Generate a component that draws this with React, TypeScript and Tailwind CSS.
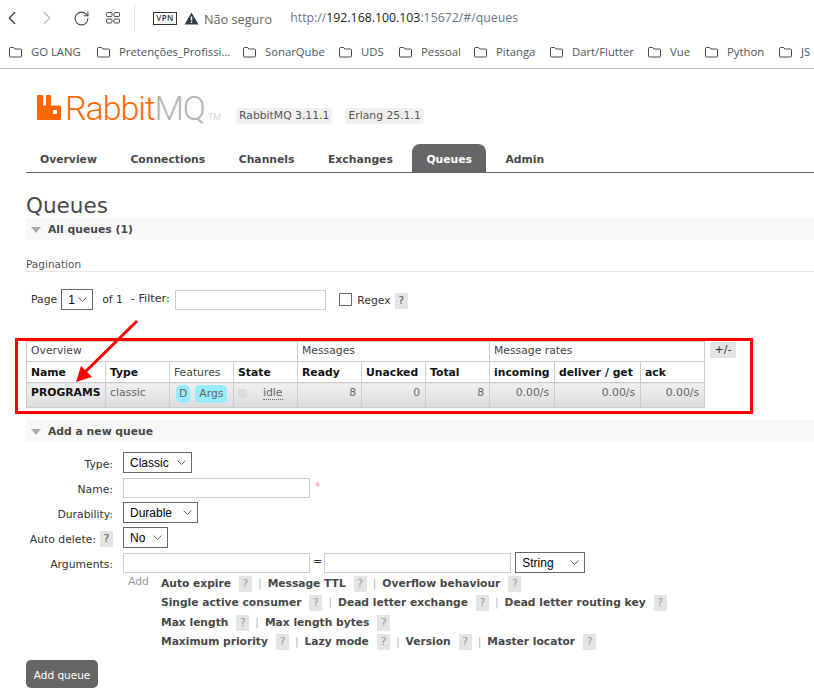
import { ChevronLeft, ChevronRight, RotateCw } from "lucide-react";
import { ReactNode } from "react";

const bookmarks = [
  { name: "GO LANG", width: "w-[88px]" },
  { name: "Pretenções_Profissi...", width: "w-[146px]" },
  { name: "SonarQube", width: "w-[96px]" },
  { name: "UDS", width: "w-[60px]" },
  { name: "Pessoal", width: "w-[75px]" },
  { name: "Pitanga", width: "w-[76px]" },
  { name: "Dart/Flutter", width: "w-[98px]" },
  { name: "Vue", width: "w-[57px]" },
  { name: "Python", width: "w-[74px]" },
  { name: "JS", width: "w-[35px]" },
];

const tabs = ["Overview", "Connections", "Channels", "Exchanges", "Queues", "Admin"];

const FolderIcon = () => (
  <svg width="13" height="11" viewBox="0 0 13 11" fill="none" stroke="#45494d" strokeWidth="1" className="mr-[9px] shrink-0">
    <path d="M0.5 1.5 a1 1 0 0 1 1-1 h3 l1.5 1.5 h5.5 a1 1 0 0 1 1 1 v6 a1 1 0 0 1-1 1 h-10 a1 1 0 0 1-1-1 z" />
  </svg>
);

const Help = ({ dark }: { dark?: boolean }) => (
  <span
    className={`inline-block h-[16px] w-[13px] bg-[#e4e4e4] text-center align-middle text-[11px] leading-[16px] font-normal ${dark ? "text-[#555]" : "text-[#999]"}`}
  >
    ?
  </span>
);

const SectionBar = ({ title }: { title: string }) => (
  <div className="flex h-[22px] items-center bg-[#f8f8f8] pl-[5px]">
    <span className="mt-[2px] h-0 w-0 border-x-[5px] border-t-[6px] border-x-transparent border-t-[#aaa]" />
    <span className="ml-[7px] pt-[3px] text-[10.8px] font-bold text-[#484848]">{title}</span>
  </div>
);

const Th = ({ children, span, bold = true }: { children: ReactNode; span?: number; bold?: boolean }) => (
  <th
    colSpan={span}
    className={`border border-[#ccc] pl-[4px] pr-[5px] text-left text-[10.8px] whitespace-nowrap ${bold ? "font-bold text-[#111]" : "font-normal text-[#444]"}`}
  >
    {children}
  </th>
);

const Td = ({ children, right = false }: { children: ReactNode; right?: boolean }) => (
  <td
    className={`border border-[#ccc] bg-linear-to-b from-[#f0f0f0] to-[#dcdcdc] pl-[4px] pr-[5px] pb-[4px] text-[10.8px] text-[#666] ${right ? "text-right" : "text-left"}`}
  >
    {children}
  </td>
);

// native-looking select with the thin chevron of the reference
const Select = ({ value, width }: { value: string; width: string }) => (
  <span
    className={`relative flex h-[21px] items-center border border-[#666] bg-white pl-[6px] text-[12px] text-black [font-family:'Liberation_Sans',sans-serif] ${width}`}
  >
    {value}
    <svg width="9" height="6" viewBox="0 0 9 6" fill="none" stroke="#666" className="absolute right-[5px] top-[7px]">
      <path d="M0.5 0.5 L4.5 4.5 L8.5 0.5" />
    </svg>
  </span>
);

const FormRow = ({ label, children }: { label: ReactNode; children: ReactNode }) => (
  <div className="flex h-[21px] items-center">
    <div className="mr-[10px] w-[87px] pt-[6px] text-right text-[10.8px] whitespace-nowrap text-[#333]">{label}</div>
    {children}
  </div>
);

const TextInput = () => <span className="h-[20px] w-[187px] border border-[#ccc] bg-white" />;

// one argument shortcut: bold link, help badge and optional separator
const Arg = ({ name, sep = true }: { name: string; sep?: boolean }) => (
  <>
    <span>{name}</span>
    <span className="ml-[8px]">
      <Help />
    </span>
    {sep && <span className="mx-[6px] font-normal text-[#a9b8c6]">|</span>}
  </>
);

const argLines = [
  ["Auto expire", "Message TTL", "Overflow behaviour"],
  ["Single active consumer", "Dead letter exchange", "Dead letter routing key"],
  ["Max length", "Max length bytes"],
  ["Maximum priority", "Lazy mode", "Version", "Master locator"],
];

export default function App() {
  return (
    <div className="relative h-[691px] w-[814px] overflow-hidden bg-white [font-family:'DejaVu_Sans',sans-serif]">
      {/* browser chrome */}
      <header className="h-[69px] border-b border-[#b4c3d0] [font-family:'Open_Sans',sans-serif]">
        <div className="flex h-[36px] items-center">
          <ChevronLeft size={22} strokeWidth={1.5} className="ml-[1px] text-[#45494d]" />
          <ChevronRight size={22} strokeWidth={1.5} className="ml-[13px] text-[#b8bcc0]" />
          <RotateCw size={17} strokeWidth={1.5} className="ml-[15px] text-[#45494d]" />
          <svg width="14" height="12" viewBox="0 0 14 12" fill="none" stroke="#45494d" className="ml-[16px]">
            <rect x="0.5" y="0.5" width="5.5" height="4" rx="1" />
            <rect x="8" y="0.5" width="5.5" height="4" rx="1" />
            <rect x="0.5" y="7" width="5.5" height="4" rx="1" />
            <rect x="8" y="7" width="5.5" height="4" rx="1" />
          </svg>
          <span className="ml-[14px] h-[28px] w-px bg-[#e6e6e6]" />
          <span className="ml-[18px] flex h-[13px] w-[24px] items-center justify-center border border-[#333] text-[8px] font-semibold tracking-[0.5px] text-[#333]">
            VPN
          </span>
          <svg width="15" height="13" viewBox="0 0 15 13" className="ml-[7px]">
            <path d="M7.5 0.5 L14.5 12.5 H0.5 Z" fill="#333d47" />
            <rect x="6.8" y="4.5" width="1.4" height="4" fill="#fff" />
            <rect x="6.8" y="9.5" width="1.4" height="1.4" fill="#fff" />
          </svg>
          <span className="ml-[5px] mt-[3px] text-[12.7px] text-[#5f6368]">Não seguro</span>
          <span className="ml-[18px] text-[12.3px] text-[#6b7885]">
            http://<span className="text-[#222]">192.168.100.103</span>:15672/#/queues
          </span>
        </div>
        <div className="flex h-[32px] items-center pl-[9px] text-[11.3px] text-[#50565c]">
          {bookmarks.map((b) => (
            <div key={b.name} className={`flex shrink-0 items-center ${b.width}`}>
              <FolderIcon />
              <span className="whitespace-nowrap">{b.name}</span>
            </div>
          ))}
        </div>
      </header>

      <main className="pl-[26px]">
        {/* logo + versions */}
        <div className="flex h-[75px] items-start pl-[11px] pt-[19px]">
          <svg width="24" height="25" viewBox="0 0 24 25" className="mt-[7px] shrink-0">
            <path
              fillRule="evenodd"
              fill="#ff6600"
              d="M0 1 a1 1 0 0 1 1-1 h4 a1 1 0 0 1 1 1 v9.5 h3 v-9.5 a1 1 0 0 1 1-1 h3 a1 1 0 0 1 1 1 v9.5 h9 a1 1 0 0 1 1 1 v12.5 a1 1 0 0 1-1 1 h-22 a1 1 0 0 1-1-1 z M16 15 h4 v4 h-4 z"
            />
          </svg>
          <div className="ml-[4px] flex w-[171px] items-baseline text-[34px] leading-[40px] font-[350] tracking-[-1.1px] [font-family:'Roboto',sans-serif]">
            <span className="text-[#ff6600]">Rabbit</span>
            <span className="text-[#b4b4b4]">MQ</span>
            <span className="ml-[3px] text-[9px] tracking-normal text-[#c4c4c4]">TM</span>
          </div>
          <span className="mt-[20px] rounded-[4px] bg-[#f0f0f0] px-[3px] text-[10.8px] leading-[16px] whitespace-nowrap text-[#555]">RabbitMQ 3.11.1</span>
          <span className="ml-[13px] mt-[20px] rounded-[4px] bg-[#f0f0f0] px-[3px] text-[10.8px] leading-[16px] whitespace-nowrap text-[#555]">Erlang 25.1.1</span>
        </div>

        {/* tabs */}
        <nav className="flex h-[29px] gap-[5.5px] border-b border-[#666]">
          {tabs.map((t) => (
            <span
              key={t}
              className={`px-[14px] pt-[8px] text-[10.8px] font-bold ${t === "Queues" ? "rounded-t-[8px] bg-[#666] text-white" : "text-[#484848]"}`}
            >
              {t}
            </span>
          ))}
        </nav>

        <h1 className="mt-[20px] text-[21.5px] leading-[25px] text-[#484848]">Queues</h1>
        <SectionBar title="All queues (1)" />

        <div className="mt-[18px] h-[14px] border-b border-[#e5e5e5] text-[10.5px] leading-[12px] text-[#555]">Pagination</div>

        <div className="mt-[17px] flex h-[21px] items-center pl-[5px] text-[10.8px] text-[#333]">
          <span className="mt-[2px]">Page</span>
          <span className="ml-[4px]">
            <Select value="1" width="w-[32px]" />
          </span>
          <span className="ml-[9px] mt-[2px]">of 1</span>
          <span className="ml-[8px] text-[11.2px]">- Filter:</span>
          <span className="ml-[5.5px] h-[20px] w-[151px] border border-[#ccc]" />
          <span className="ml-[13px] h-[13px] w-[13px] border border-[#666]" />
          <span className="ml-[5px] mt-[4px]">Regex</span>
          <span className="ml-[4px] mt-[4px]">
            <Help dark />
          </span>
        </div>

        {/* queue table */}
        <div className="mt-[31px] flex items-start">
          <table className="w-[678px] table-fixed border-collapse">
            <colgroup>
              <col className="w-[79px]" />
              <col className="w-[64px]" />
              <col className="w-[64px]" />
              <col className="w-[64px]" />
              <col className="w-[64px]" />
              <col className="w-[64px]" />
              <col className="w-[64px]" />
              <col className="w-[65px]" />
              <col className="w-[86px]" />
              <col className="w-[64px]" />
            </colgroup>
            <thead>
              <tr className="h-[20px]">
                <Th span={4} bold={false}>Overview</Th>
                <Th span={3} bold={false}>Messages</Th>
                <Th span={3} bold={false}>Message rates</Th>
              </tr>
              <tr className="h-[21px] [&>th]:pt-[3px]">
                <Th>Name</Th>
                <Th>Type</Th>
                <Th bold={false}>Features</Th>
                <Th>State</Th>
                <Th>Ready</Th>
                <Th>Unacked</Th>
                <Th>Total</Th>
                <Th>incoming</Th>
                <Th>deliver / get</Th>
                <Th>ack</Th>
              </tr>
            </thead>
            <tbody>
              <tr className="h-[24px]">
                <Td>
                  <span className="font-bold text-[#111]">PROGRAMS</span>
                </Td>
                <Td>classic</Td>
                <Td>
                  <span className="ml-[2px] flex gap-[5px] pt-[2px]">
                    <span className="rounded-[5px] bg-[#99ebff] px-[3px] leading-[18px]">D</span>
                    <span className="rounded-[5px] bg-[#99ebff] px-[4px] leading-[18px]">Args</span>
                  </span>
                </Td>
                <Td>
                  <span className="flex items-center">
                    <span className="h-[9px] w-[9px] bg-[#dcdcdc]" />
                    <span className="ml-[16px] border-b border-dotted border-[#666] leading-[13px]">idle</span>
                  </span>
                </Td>
                <Td right>8</Td>
                <Td right>0</Td>
                <Td right>8</Td>
                <Td right>0.00/s</Td>
                <Td right>0.00/s</Td>
                <Td right>0.00/s</Td>
              </tr>
            </tbody>
          </table>
          <span className="ml-[5px] mt-[1px] flex h-[16px] w-[26px] items-center justify-center bg-[#e4e4e4] text-[11px] text-[#333]">+/-</span>
        </div>

        <div className="mt-[12px]">
          <SectionBar title="Add a new queue" />
        </div>

        {/* add queue form */}
        <div className="mt-[10px] flex flex-col gap-[4px]">
          <FormRow label="Type:">
            <Select value="Classic" width="w-[69px]" />
          </FormRow>
          <FormRow label="Name:">
            <TextInput />
            <span className="ml-[5px] text-[11px] text-[#f99]">*</span>
          </FormRow>
          <FormRow label="Durability:">
            <Select value="Durable" width="w-[75px]" />
          </FormRow>
          <FormRow
            label={
              <span className="flex items-center justify-end">
                Auto delete:
                <span className="-mt-[3px] ml-[4px]">
                  <Help dark />
                </span>
              </span>
            }
          >
            <Select value="No" width="w-[45px]" />
          </FormRow>
          <FormRow label="Arguments:">
            <TextInput />
            <span className="ml-[3px] mr-[2px] text-[11px] text-[#333]">=</span>
            <TextInput />
            <span className="ml-[4px]">
              <Select value="String" width="w-[70px]" />
            </span>
          </FormRow>
        </div>

        <div className="mt-[1px] flex pl-[102px]">
          <span className="w-[33px] text-[10.8px] text-[#999]">Add</span>
          <div className="flex flex-col text-[10.7px] font-bold text-[#484848]">
            {argLines.map((line, i) => (
              <div key={i} className="flex h-[19.5px] items-center whitespace-nowrap">
                {line.map((name, j) => (
                  <Arg key={name} name={name} sep={j < line.length - 1} />
                ))}
              </div>
            ))}
          </div>
        </div>

        <button className="mt-[8px] h-[28px] w-[72px] rounded-[5px] bg-[#666] pt-[3px] text-[10.5px] text-white">Add queue</button>
      </main>

      {/* red annotation drawn over the screenshot */}
      <div className="absolute left-[15px] top-[338px] h-[76px] w-[738px] border-[3px] border-[#ff0000]" />
      <svg width="80" height="75" viewBox="0 0 80 75" className="absolute left-[70px] top-[315px]">
        <path d="M67 6 L12 60" stroke="#ff0000" strokeWidth="3" fill="none" />
        <path d="M6 67 L11 51 L22 62 Z" fill="#ff0000" />
      </svg>
    </div>
  );
}
